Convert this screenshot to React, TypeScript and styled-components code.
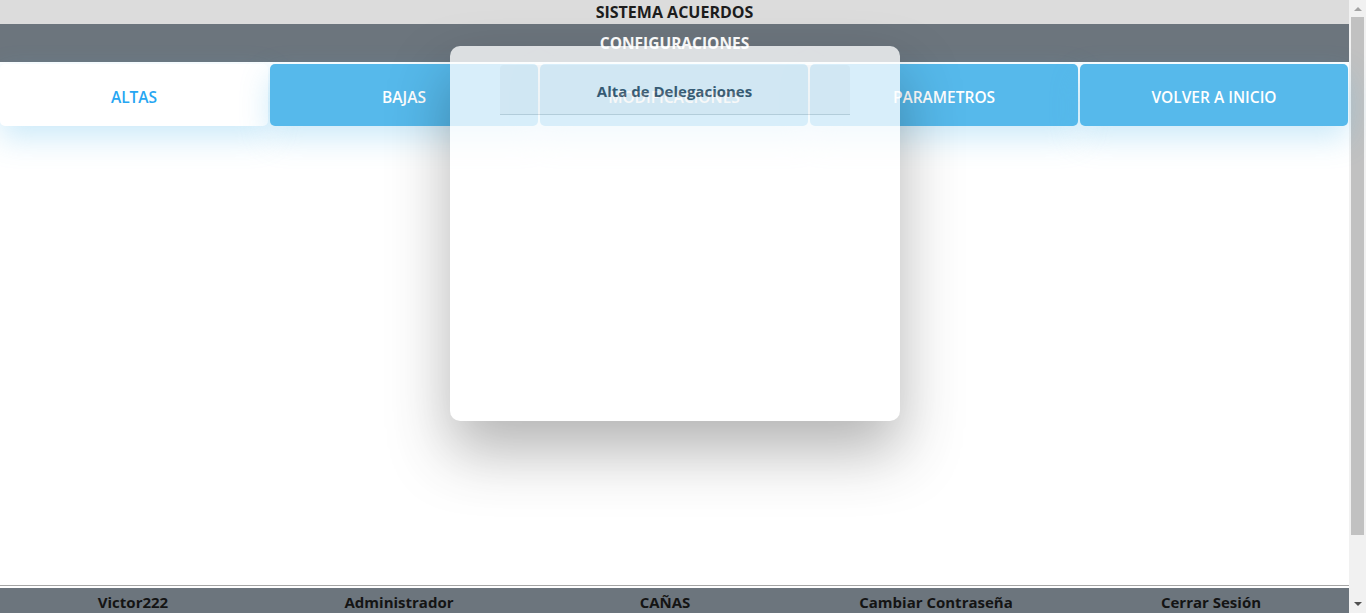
import React from "react";
import styled, { createGlobalStyle } from "styled-components";

const GlobalStyle = createGlobalStyle`
  html, body {
    margin: 0;
    padding: 0;
    overflow: hidden;
  }
  body {
    background: #ffffff;
    font-family: "Open Sans", "Noto Sans", "Liberation Sans", sans-serif;
  }
`;

const Shell = styled.div`
  display: flex;
  height: 100vh;
`;

const Main = styled.div`
  position: relative;
  flex: 1;
  min-width: 0;
  display: flex;
  flex-direction: column;
`;

const TitleBar = styled.header`
  height: 24px;
  background: #dcdcdc;
  display: flex;
  align-items: center;
  justify-content: center;
  font-weight: 700;
  font-size: 16px;
  color: #1d1d1d;
`;

const SectionBar = styled.div`
  height: 38px;
  background: #6c757d;
  display: flex;
  align-items: center;
  justify-content: center;
  font-weight: 700;
  font-size: 15.5px;
  color: #ffffff;
`;

const TabRow = styled.nav`
  display: grid;
  grid-template-columns: repeat(5, 1fr);
  gap: 2px;
  padding: 2px 1px 0 0;
  background: #ffffff;
`;

const Tab = styled.button<{ $active?: boolean }>`
  height: 62px;
  border: none;
  border-radius: 5px;
  background: ${(p) => (p.$active ? "#ffffff" : "#56b9eb")};
  color: ${(p) => (p.$active ? "#27a6f2" : "#ffffff")};
  font-family: "Open Sans", "Noto Sans", sans-serif;
  font-weight: 600;
  font-size: 15.5px;
  box-shadow: 0 12px 30px rgba(86, 185, 235, 0.3);
  cursor: pointer;
  padding: 4px 0 0;
`;

const Content = styled.main`
  flex: 1;
`;

const Overlay = styled.div`
  position: absolute;
  top: 0;
  left: 0;
  right: 0;
  display: flex;
  justify-content: center;
  padding-top: 46px;
  pointer-events: none;
`;

const Modal = styled.section`
  width: 450px;
  height: 375px;
  box-sizing: border-box;
  padding: 19px 50px;
  background: #ffffff;
  border-radius: 10px;
  opacity: 0.77;
  box-shadow: 0 30px 60px rgba(0, 0, 0, 0.38);
`;

const ModalTitle = styled.h2`
  margin: 0;
  height: 50px;
  box-sizing: border-box;
  display: flex;
  align-items: center;
  justify-content: center;
  padding-top: 2px;
  background: #f6f6f6;
  border-bottom: 1px solid #cfd3d6;
  border-radius: 4px 4px 0 0;
  font-size: 15px;
  font-weight: 700;
  color: #2c3e50;
`;

const Footer = styled.footer`
  border-top: 1px solid #a5a5a5;
  padding-top: 2px;
  background: #ffffff;
`;

const FooterBar = styled.div`
  height: 25px;
  background: #6c757d;
  display: grid;
  grid-template-columns: 266fr 266fr 266fr 276fr 274fr;
  padding-right: 1px;
`;

const FooterItem = styled.span`
  text-align: center;
  font-weight: 700;
  font-size: 15px;
  line-height: 20px;
  padding-top: 4px;
  color: #141414;
  white-space: nowrap;
`;

const ScrollTrack = styled.aside`
  width: 17px;
  flex: none;
  background: #f1f1f1;
  display: flex;
  flex-direction: column;
`;

const ScrollButton = styled.div`
  height: 17px;
  display: flex;
  align-items: center;
  justify-content: center;
`;

const ScrollThumb = styled.div`
  height: 518px;
  margin: 0 2px;
  background: #c1c1c1;
`;

const ScrollRest = styled.div`
  flex: 1;
`;

const tabs = ["ALTAS", "BAJAS", "MODIFICACIONES", "PARAMETROS", "VOLVER A INICIO"];
const footer = ["Victor222", "Administrador", "CAÑAS", "Cambiar Contraseña", "Cerrar Sesión"];

export default function App() {
  return (
    <>
      <GlobalStyle />
      <Shell>
        <Main>
          <TitleBar>SISTEMA ACUERDOS</TitleBar>
          <SectionBar>CONFIGURACIONES</SectionBar>
          <TabRow>
            {tabs.map((t, i) => (
              <Tab key={t} $active={i === 0}>
                {t}
              </Tab>
            ))}
          </TabRow>
          <Content />
          <Footer>
            <FooterBar>
              {footer.map((f) => (
                <FooterItem key={f}>{f}</FooterItem>
              ))}
            </FooterBar>
          </Footer>
          <Overlay>
            <Modal>
              <ModalTitle>Alta de Delegaciones</ModalTitle>
            </Modal>
          </Overlay>
        </Main>
        <ScrollTrack>
          <ScrollButton>
            <svg width="8" height="5" viewBox="0 0 8 5">
              <polygon points="0,5 4,1 8,5" fill="#a3a3a3" />
            </svg>
          </ScrollButton>
          <ScrollThumb />
          <ScrollRest />
          <ScrollButton>
            <svg width="8" height="5" viewBox="0 0 8 5">
              <polygon points="0,0 8,0 4,4" fill="#505050" />
            </svg>
          </ScrollButton>
        </ScrollTrack>
      </Shell>
    </>
  );
}
